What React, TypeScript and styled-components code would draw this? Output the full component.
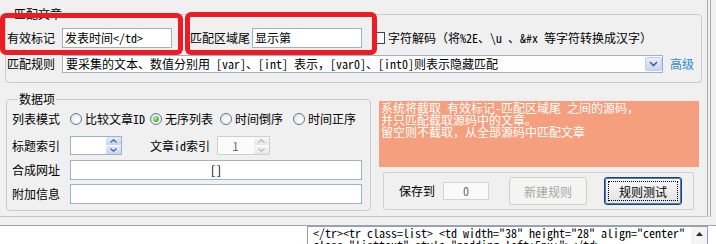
import React from "react";
import styled, { createGlobalStyle } from "styled-components";

const UI_FONT = `"Noto Sans Mono CJK SC", "Noto Sans CJK SC", "Liberation Sans", sans-serif`;
const MONO_FONT = `"Noto Sans Mono CJK SC", "Liberation Mono", monospace`;

const GlobalStyle = createGlobalStyle`
  html, body {
    margin: 0;
    padding: 0;
  }
  body {
    background: #ffffff;
    font-family: ${UI_FONT};
    font-size: 12px;
    color: #000000;
  }
  * {
    box-sizing: border-box;
  }
`;

const ChevronDown = () => (
  <svg width="9" height="6" viewBox="0 0 9 6">
    <polyline points="1,1 4.5,4.5 8,1" fill="none" stroke="#4d6185" strokeWidth="1.6" />
  </svg>
);

const Arrow: React.FC<{ up?: boolean; color?: string }> = ({ up, color = "#4d6185" }) => (
  <svg width="7" height="4" viewBox="0 0 7 4">
    {up ? (
      <polyline points="0.5,3.5 3.5,0.8 6.5,3.5" fill="none" stroke={color} strokeWidth="1.2" />
    ) : (
      <polyline points="0.5,0.5 3.5,3.2 6.5,0.5" fill="none" stroke={color} strokeWidth="1.2" />
    )}
  </svg>
);

const App: React.FC = () => {
  return (
    <>
      <GlobalStyle />
      <Window>
        <Panel>
          <Group $w={697} $pad="7px 0 9px 1px">
            <Legend>匹配文章</Legend>
            <Row $h={20}>
              <Label $w={55}>有效标记</Label>
              <Field $w={110}>{"发表时间</td>"}</Field>
              <Label $w={62} $ml={18}>
                匹配区域尾
              </Label>
              <Field $w={110}>显示第</Field>
              <CheckBox $ml={11} />
              <Label $ml={3}>{"字符解码（将%2E、\\u 、&#x 等字符转换成汉字）"}</Label>
            </Row>
            <Row $h={18} $mt={7}>
              <Label $w={55}>匹配规则</Label>
              <Combo>
                <ComboText>
                  要采集的文本、数值分别用 [var]、[int] 表示，[var0]、[int0]则表示隐藏匹配
                </ComboText>
                <ComboButton>
                  <ChevronDown />
                </ComboButton>
              </Combo>
              <LinkText>高级</LinkText>
            </Row>
          </Group>

          <Lower>
            <Group $w={365} $ml={1} $pad="3px 0 7px 5px">
              <Legend>数据项</Legend>
              <Row $h={20}>
                <Label $w={58}>列表模式</Label>
                <RadioOption $w={80}>
                  <Radio />
                  <span>比较文章ID</span>
                </RadioOption>
                <RadioOption $w={70}>
                  <Radio $checked />
                  <span>无序列表</span>
                </RadioOption>
                <RadioOption $w={73}>
                  <Radio />
                  <span>时间倒序</span>
                </RadioOption>
                <RadioOption>
                  <Radio />
                  <span>时间正序</span>
                </RadioOption>
              </Row>
              <Row $h={19} $mt={7}>
                <Label $w={58}>标题索引</Label>
                <Spinner $w={52}>
                  <SpinValue />
                  <SpinButtons>
                    <SpinButton>
                      <Arrow up />
                    </SpinButton>
                    <SpinButton>
                      <Arrow />
                    </SpinButton>
                  </SpinButtons>
                </Spinner>
                <Label $w={67} $ml={28}>
                  文章id索引
                </Label>
                <Spinner $w={53} $disabled>
                  <SpinValue $disabled>1</SpinValue>
                  <SpinButtons>
                    <SpinButton $disabled>
                      <Arrow up color="#b8b8b8" />
                    </SpinButton>
                    <SpinButton $disabled>
                      <Arrow color="#b8b8b8" />
                    </SpinButton>
                  </SpinButtons>
                </Spinner>
              </Row>
              <Row $h={19} $mt={5}>
                <Label $w={58}>合成网址</Label>
                <Field $w={292} $align="center">
                  []
                </Field>
              </Row>
              <Row $h={19} $mt={5}>
                <Label $w={58}>附加信息</Label>
                <Field $w={292} />
              </Row>
            </Group>

            <Side>
              <Notice>
                {"系统将截取 有效标记-匹配区域尾 之间的源码，\n并只匹配截取源码中的文章。\n留空则不截取，从全部源码中匹配文章"}
              </Notice>
              <Actions>
                <Label $w={36}>保存到</Label>
                <Field $w={46} $h={18} $align="center" $disabled>
                  0
                </Field>
                <Button $ml={20} disabled>
                  新建规则
                </Button>
                <Button $ml={17} $default>
                  <FocusRing>规则测试</FocusRing>
                </Button>
              </Actions>
            </Side>
          </Lower>
        </Panel>

        <Spacer />

        <Output>
          <SourceBox>
            <SourceText>
              {'</tr><tr class=list> <td width="38" height="28" align="center"\nclass="listtext" style="padding-left:5px;"></td>'}
            </SourceText>
            <ScrollBar>
              <ScrollArrow>
                <svg width="7" height="4" viewBox="0 0 7 4">
                  <polygon points="0,4 3.5,0 7,4" fill="#2b2b2b" />
                </svg>
              </ScrollArrow>
            </ScrollBar>
          </SourceBox>
        </Output>

        <Highlight $x={0} $y={13} $w={183} $h={42} />
        <Highlight $x={185} $y={12} $w={192} $h={43} />
      </Window>
    </>
  );
};

export default App;

const Window = styled.div`
  position: relative;
  width: 716px;
  height: 244px;
  overflow: hidden;
  background: #f0f0f0;
  display: flex;
  flex-direction: column;
`;

const Panel = styled.div`
  flex: none;
  width: 711px;
  height: 217px;
  padding: 7px 0 0 5px;
  border-right: 4px double #acacac;
  border-bottom: 1px solid #c4c4c4;
  overflow: hidden;
`;

const Group = styled.fieldset<{ $w: number; $ml?: number; $pad: string }>`
  flex: none;
  margin: 0 0 0 ${(p) => p.$ml ?? 0}px;
  width: ${(p) => p.$w}px;
  min-inline-size: 0;
  padding: ${(p) => p.$pad};
  border: 1px solid #cbcbcb;
  border-radius: 4px;
`;

const Legend = styled.legend`
  margin-left: 6px;
  padding: 0 1px;
  height: 14px;
  font-size: 12px;
  line-height: 14px;
`;

const Row = styled.div<{ $h: number; $mt?: number }>`
  display: flex;
  align-items: center;
  height: ${(p) => p.$h}px;
  margin-top: ${(p) => p.$mt ?? 0}px;
`;

const Label = styled.span<{ $w?: number; $ml?: number }>`
  flex: none;
  width: ${(p) => (p.$w ? `${p.$w}px` : "auto")};
  margin-left: ${(p) => p.$ml ?? 0}px;
  font-size: 12px;
  line-height: 14px;
  white-space: nowrap;
`;

const Field = styled.div<{ $w: number; $h?: number; $align?: string; $disabled?: boolean }>`
  flex: none;
  display: flex;
  align-items: center;
  justify-content: ${(p) => (p.$align === "center" ? "center" : "flex-start")};
  width: ${(p) => p.$w}px;
  height: ${(p) => p.$h ?? 20}px;
  padding: 0 2px;
  border: 1px solid ${(p) => (p.$disabled ? "#d4d4d4" : "#9fb1c6")};
  background: ${(p) => (p.$disabled ? "#fafafa" : "#ffffff")};
  color: ${(p) => (p.$disabled ? "#6d6d6d" : "#000000")};
  font-size: 12px;
  line-height: 14px;
  white-space: nowrap;
  overflow: hidden;
`;

const CheckBox = styled.span<{ $ml?: number }>`
  flex: none;
  width: 12px;
  height: 12px;
  margin-left: ${(p) => p.$ml ?? 0}px;
  border: 1px solid #3d4654;
  background: linear-gradient(135deg, #f3f3f3 0%, #ffffff 100%);
`;

const Combo = styled.div`
  flex: none;
  display: flex;
  align-items: stretch;
  width: 601px;
  height: 18px;
  padding: 0 0 0 3px;
  border: 1px solid #9fb1c6;
  background: #ffffff;
`;

const ComboText = styled.span`
  flex: 1;
  display: flex;
  align-items: center;
  font-size: 12px;
  line-height: 16px;
  white-space: nowrap;
`;

const ComboButton = styled.div`
  flex: none;
  width: 17px;
  margin: 1px 0;
  display: flex;
  align-items: center;
  justify-content: center;
  border: 1px solid #bdcdeb;
  border-radius: 2px;
  background: linear-gradient(180deg, #e8effc 0%, #c6d6f3 100%);
`;

const LinkText = styled.span`
  margin-left: 7px;
  font-size: 12px;
  line-height: 14px;
  color: #2b8ad0;
`;

const Lower = styled.div`
  display: flex;
  align-items: flex-start;
  margin-top: 9px;
`;

const RadioOption = styled.label<{ $w?: number }>`
  flex: none;
  display: flex;
  align-items: center;
  gap: 3px;
  width: ${(p) => (p.$w ? `${p.$w}px` : "auto")};
  font-size: 12px;
  line-height: 14px;
  white-space: nowrap;
`;

const Radio = styled.span<{ $checked?: boolean }>`
  flex: none;
  display: flex;
  align-items: center;
  justify-content: center;
  width: 12px;
  height: 12px;
  border-radius: 50%;
  border: 1px solid #5f7895;
  background: radial-gradient(circle at 65% 65%, #ffffff 0%, #e9edf1 60%, #d3d9e0 100%);

  &::after {
    content: "";
    display: ${(p) => (p.$checked ? "block" : "none")};
    width: 6px;
    height: 6px;
    border-radius: 50%;
    background: radial-gradient(circle at 35% 35%, #b9f29c 0%, #5cbf3f 55%, #2c8a22 100%);
  }
`;

const Spinner = styled.div<{ $w: number; $disabled?: boolean }>`
  flex: none;
  display: flex;
  width: ${(p) => p.$w}px;
  height: 19px;
  border: 1px solid ${(p) => (p.$disabled ? "#cfcfcf" : "#9fb1c6")};
  background: ${(p) => (p.$disabled ? "#fbfbfb" : "#ffffff")};
`;

const SpinValue = styled.div<{ $disabled?: boolean }>`
  flex: 1;
  display: flex;
  align-items: center;
  justify-content: center;
  font-size: 12px;
  color: ${(p) => (p.$disabled ? "#6d6d6d" : "#000000")};
`;

const SpinButtons = styled.div`
  flex: none;
  width: 16px;
  display: flex;
  flex-direction: column;
  gap: 1px;
  padding: 0 0 0 1px;
`;

const SpinButton = styled.div<{ $disabled?: boolean }>`
  flex: 1;
  display: flex;
  align-items: center;
  justify-content: center;
  border-radius: 1px;
  background: ${(p) =>
    p.$disabled
      ? "linear-gradient(180deg, #f6f6f6 0%, #e6e6e6 100%)"
      : "linear-gradient(180deg, #e4ecfb 0%, #c3d3f1 100%)"};
`;

const Side = styled.div`
  flex: none;
  display: flex;
  flex-direction: column;
  width: 320px;
  margin: 9px 0 0 8px;
`;

const Notice = styled.div`
  height: 66px;
  padding: 1px 2px;
  background: #f59f7e;
  color: #ffffff;
  font-size: 12px;
  line-height: 12px;
  white-space: pre;
`;

const Actions = styled.div`
  display: flex;
  align-items: center;
  width: 311px;
  height: 38px;
  margin: 5px 0 0 4px;
  padding-left: 15px;
  border: 1px solid #cfcfcf;
  border-radius: 2px;
  gap: 8px;
`;

const Button = styled.button<{ $ml?: number; $default?: boolean }>`
  flex: none;
  width: 78px;
  height: 28px;
  margin-left: ${(p) => (p.$ml ?? 0) - 8}px;
  padding: ${(p) => (p.$default ? "3px" : "0")};
  font-family: ${UI_FONT};
  font-size: 12px;
  color: #000000;
  border: 1px solid ${(p) => (p.$default ? "#1d3f6e" : "#cfcfcf")};
  border-radius: 3px;
  background: ${(p) =>
    p.$default ? "linear-gradient(180deg, #f7f7f7 0%, #e3e3e3 100%)" : "#f4f4f2"};
  box-shadow: ${(p) => (p.$default ? "inset 0 0 0 1px #4f7fb8" : "none")};

  &:disabled {
    color: #a6a6a6;
  }
`;

const FocusRing = styled.span`
  display: flex;
  align-items: center;
  justify-content: center;
  width: 100%;
  height: 100%;
  border: 1px dotted #000000;
`;

const Spacer = styled.div`
  flex: none;
  height: 8px;
`;

const Output = styled.div`
  flex: 1;
  min-height: 0;
  padding-left: 307px;
  border-top: 1px solid #a3a3a3;
  background: #ffffff;
`;

const SourceBox = styled.div`
  display: flex;
  width: 401px;
  height: 40px;
  border: 1px solid #8aa0bb;
  background: #ffffff;
`;

const SourceText = styled.div`
  flex: 1;
  padding: 0 0 0 5px;
  font-family: ${MONO_FONT};
  font-size: 12px;
  line-height: 12px;
  white-space: pre;
  overflow: hidden;
  color: #000000;
`;

const ScrollBar = styled.div`
  flex: none;
  width: 16px;
  background: #f4f4f4;
`;

const ScrollArrow = styled.div`
  display: flex;
  align-items: center;
  justify-content: center;
  height: 10px;
  margin-top: 2px;
`;

const Highlight = styled.div<{ $x: number; $y: number; $w: number; $h: number }>`
  position: absolute;
  left: ${(p) => p.$x}px;
  top: ${(p) => p.$y}px;
  width: ${(p) => p.$w}px;
  height: ${(p) => p.$h}px;
  border: 5px solid #ec1c24;
  border-radius: 6px;
  pointer-events: none;
`;
